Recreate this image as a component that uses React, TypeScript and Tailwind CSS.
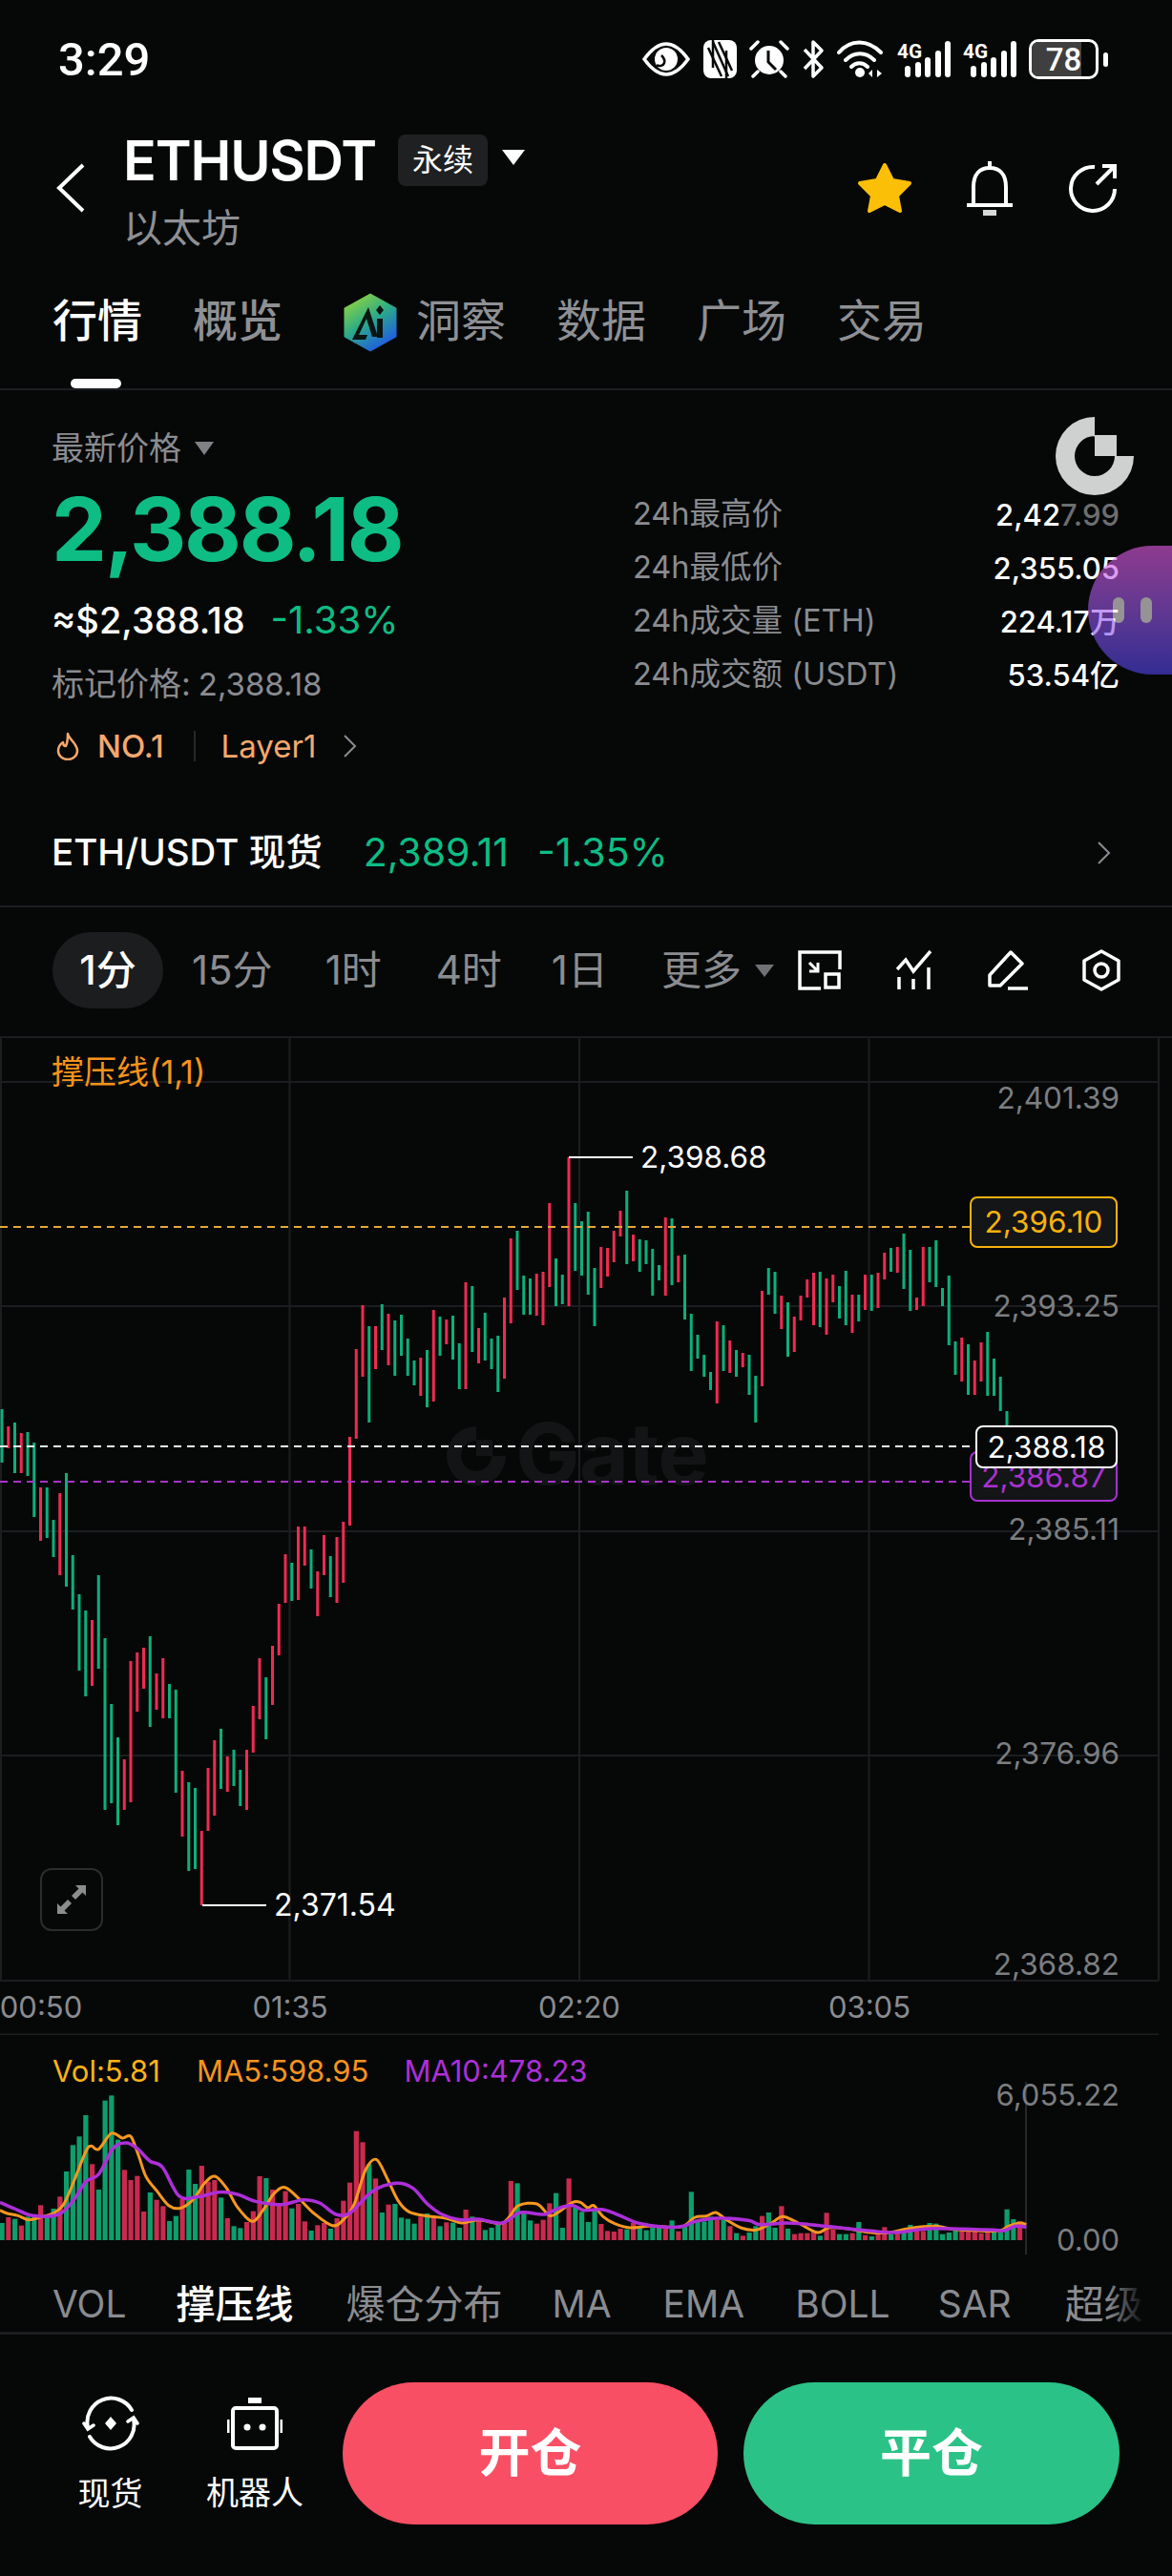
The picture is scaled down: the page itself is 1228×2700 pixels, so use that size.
const candleData =
  "g1477-1533 r1495-1518 g1491-1544 r1502-1544 g1501-1547 g1512-1590 r1559-1615 g1559-1612 g1593-1632 r1565-1651 g1544-1663 g1630-1687 g1671-1751 g1688-1778 r1698-1767 g1651-1749 g1717-1897 g1786-1890 g1821-1913 r1844-1897 r1741-1889 r1732-1794 r1727-1770 g1715-1810 r1754-1792 r1738-1801 g1765-1801 g1771-1879 r1856-1925 g1868-1961 g1874-1959 r1919-1997 r1853-1919 r1824-1903 g1812-1875 r1841-1878 g1834-1872 g1855-1893 r1834-1897 r1788-1837 r1738-1802 g1758-1823 r1725-1787 r1681-1735 r1629-1680 g1638-1678 r1600-1677 r1600-1641 g1624-1665 r1647-1694 r1609-1651 g1631-1674 r1611-1680 r1595-1659 r1506-1599 r1414-1508 r1368-1443 g1390-1491 r1390-1435 g1367-1415 r1377-1431 g1384-1442 g1378-1421 g1403-1442 g1426-1452 r1423-1463 g1415-1475 r1373-1469 g1380-1421 r1383-1409 g1379-1425 g1408-1456 r1344-1456 g1348-1417 r1392-1429 g1376-1426 g1403-1435 g1400-1459 r1360-1445 r1298-1387 g1290-1352 g1337-1378 g1340-1378 r1335-1379 r1333-1389 r1261-1349 g1319-1369 g1336-1367 r1213-1369 g1261-1332 g1280-1337 g1270-1357 g1329-1390 r1307-1350 r1308-1338 r1290-1323 r1269-1296 g1248-1325 r1294-1322 g1299-1333 g1300-1325 g1309-1358 g1326-1342 r1276-1358 g1277-1347 r1316-1344 g1315-1383 g1377-1437 g1399-1424 g1420-1443 g1438-1457 r1385-1471 g1389-1437 r1405-1439 g1415-1443 r1418-1433 g1420-1462 g1442-1491 r1353-1453 g1329-1357 g1333-1377 r1358-1393 g1365-1422 r1380-1417 r1358-1384 r1341-1360 r1334-1389 g1333-1391 r1340-1399 r1336-1365 g1348-1382 g1332-1389 r1357-1397 g1357-1385 r1336-1373 g1336-1374 r1334-1371 r1313-1341 g1308-1333 r1307-1334 g1293-1351 g1310-1374 r1360-1373 r1307-1369 g1307-1344 g1300-1349 g1350-1369 g1337-1410 g1406-1441 r1402-1448 g1409-1462 r1426-1462 r1407-1448 g1396-1463 g1424-1463 g1443-1479 g1479-1500"
    .split(" ");

const volData =
  "g630 r612 g617 r638 g610 g612 r574 g610 g585 r547 g468 g385 g358 g291 r445 g525 g245 g229 g368 r463 r495 r482 r594 g534 r557 r577 g624 g608 r555 g462 g507 r450 r500 r495 g550 r615 g640 g646 r627 r593 r483 g489 r525 r575 r530 g584 r570 r625 g654 r637 r630 g648 r615 r560 r503 r341 r376 g445 r490 g597 r572 g570 g613 g617 g632 r610 g600 r610 g640 r628 g629 g645 r588 g610 r620 g652 g645 g635 r625 r498 g505 g595 g622 r632 r620 r568 g536 g645 r490 g580 g595 g627 g590 r633 r655 r657 r648 g650 r630 g640 g653 g645 g640 r645 g622 r656 g640 g532 g620 g625 g610 r620 g620 r640 g662 r670 g660 g640 r608 g597 g645 r577 g648 r665 r662 r662 r655 g670 r598 r650 g665 g665 r662 g627 r668 g672 r655 r643 g665 r660 g655 g636 r655 r655 g630 g632 g665 g660 g650 r655 r655 r650 r662 r655 g660 g660 g587 g618 r625"
    .split(" ");

const toLeft = (p: number[][]) => p.map(([x, y]) => [x / 2.613, 2120 + y / 3]);
const toRight = (p: number[][]) => p.map(([x, y]) => [600 + x / 2.497, 2120 + y / 3]);

const ma5 = [
  ...toLeft([[0,590],[20,600],[50,607],[78,620],[110,612],[150,597],[175,570],[200,505],[235,405],[250,388],[270,398],[305,348],[335,363],[358,358],[380,420],[400,485],[430,530],[462,575],[495,583],[530,555],[560,505],[588,483],[620,520],[650,580],[690,625],[720,590],[750,538],[780,518],[820,555],[860,600],[910,638],[940,620],[970,570],[1000,465],[1030,430],[1060,490],[1090,560],[1120,595],[1170,608],[1220,615],[1265,630],[1310,620],[1370,632],[1395,610],[1420,575],[1470,570],[1505,607],[1530,595]]),
  ...toRight([[0,565],[20,565],[40,582],[55,575],[80,610],[110,632],[150,645],[200,640],[250,643],[290,640],[320,612],[350,608],[375,597],[400,618],[440,645],[480,652],[520,630],[550,610],[590,630],[640,660],[670,645],[720,648],[780,660],[830,660],[880,647],[950,640],[1000,650],[1110,655],[1140,640],[1170,630],[1187,635]]),
];

const ma10 = [
  ...toLeft([[0,565],[40,585],[90,607],[160,603],[200,560],[235,500],[270,477],[310,395],[345,378],[375,395],[410,435],[445,455],[490,545],[540,548],[600,533],[650,540],[700,562],[770,572],[830,557],[875,567],[920,603],[960,597],[1020,530],[1085,505],[1130,520],[1170,570],[1210,603],[1260,620],[1310,618],[1375,630],[1425,597],[1490,603],[1530,583]]),
  ...toRight([[0,575],[30,590],[80,588],[130,610],[170,630],[240,643],[290,640],[320,625],[380,615],[460,622],[490,635],[560,630],[620,635],[700,645],[780,655],[840,660],[900,652],[950,647],[1100,652],[1125,655],[1160,640],[1187,643]]),
];

// catmull-rom through the traced points
function smooth(p: number[][]) {
  let d = `M${p[0][0]} ${p[0][1]}`;
  for (let i = 0; i < p.length - 1; i++) {
    const a = p[i - 1] || p[i];
    const b = p[i];
    const c = p[i + 1];
    const e = p[i + 2] || c;
    d += ` C${b[0] + (c[0] - a[0]) / 6} ${b[1] + (c[1] - a[1]) / 6} ${c[0] - (e[0] - b[0]) / 6} ${c[1] - (e[1] - b[1]) / 6} ${c[0]} ${c[1]}`;
  }
  return d;
}

const gatePath = "M41 0A41 41 0 1 0 82 41H62A21 21 0 1 1 41 20ZM41 19H64V41H41Z";

function Chevron({ className }: { className?: string }) {
  return (
    <svg width="15" height="24" viewBox="0 0 15 24" className={className}>
      <path d="M2 1L13 12L2 23" fill="none" stroke="#8a8c90" strokeWidth="2" />
    </svg>
  );
}

function Signal() {
  return (
    <svg width="56" height="42" viewBox="0 0 56 42" fill="#fff">
      <text x="0" y="20" fontSize="21" fontWeight="700" fontFamily="Roboto, sans-serif" textLength="26" lengthAdjust="spacingAndGlyphs">4G</text>
      <rect x="8" y="28" width="6" height="12" rx="3" />
      <rect x="19" y="24" width="6" height="16" rx="3" />
      <rect x="29" y="19" width="6" height="21" rx="3" />
      <rect x="40" y="12" width="6" height="28" rx="3" />
      <rect x="50" y="2" width="6" height="38" rx="3" />
    </svg>
  );
}

function StatusBar() {
  return (
    <div className="flex h-[124px] items-center justify-between pl-[61px] pr-[67px]">
      <span className="font-['Roboto'] text-[49px] font-medium leading-none text-white">3:29</span>
      <div className="flex items-center">
        {/* eye */}
        <svg width="50" height="36" viewBox="0 0 50 36" className="mr-[14px]">
          <path d="M2 18C10 7 17 2 25 2s15 5 23 16c-8 11-15 16-23 16S10 29 2 18Z" fill="none" stroke="#fff" strokeWidth="3.5" />
          <circle cx="25" cy="18" r="12" fill="#fff" />
          <path d="M15 24c3 2 7 1 8-2s-1-6-3-8" fill="none" stroke="#060808" strokeWidth="2.5" />
        </svg>
        {/* nfc */}
        <svg width="35" height="40" viewBox="0 0 35 40" className="mr-[13px]">
          <rect width="35" height="40" rx="8" fill="#fff" />
          <path d="M10 0V29M24 11V40" fill="none" stroke="#060808" strokeWidth="2.5" />
          <path d="M10 2L26 38M16 2L30 32M5 8L19 38" fill="none" stroke="#060808" strokeWidth="2.5" />
        </svg>
        {/* alarm */}
        <svg width="42" height="40" viewBox="0 0 42 40" className="mr-[13px]">
          <circle cx="21" cy="21" r="15" fill="#fff" />
          <path d="M20 11V23L28 31" fill="none" stroke="#060808" strokeWidth="3" />
          <path d="M2 9L9 2M40 9L33 2M9 33L4 38M33 33L38 38" stroke="#fff" strokeWidth="3.5" strokeLinecap="round" />
        </svg>
        {/* bluetooth */}
        <svg width="24" height="42" viewBox="0 0 24 42" className="mr-[13px]">
          <path d="M3 11L21 30L12 39V3L21 12L3 31" fill="none" stroke="#fff" strokeWidth="3.5" strokeLinejoin="round" />
        </svg>
        {/* wifi */}
        <svg width="49" height="42" viewBox="0 0 49 42" className="mr-[14px]">
          <path d="M2 14C14 0 32 0 46 14M9 22C18 13 30 13 39 22M15 29C20 24 27 24 32 29" fill="none" stroke="#fff" strokeWidth="4" strokeLinecap="round" />
          <circle cx="24" cy="35" r="5" fill="#fff" />
          <path d="M37 32V40L33 36ZM42 32V40L47 36Z" fill="#fff" />
        </svg>
        <Signal />
        <div className="w-[13px]" />
        <Signal />
        {/* battery */}
        <div className="relative ml-[13px] flex h-[42px] w-[73px] items-center justify-center overflow-hidden rounded-[10px] border-[3px] border-white">
          <div className="absolute inset-y-0 left-0 w-[78%] bg-[#3f3f3f]" />
          <span className="relative font-['Roboto'] text-[33px] font-medium leading-none text-white">78</span>
        </div>
        <div className="ml-[5px] h-[15px] w-[5px] rounded-full bg-white" />
      </div>
    </div>
  );
}

function Header() {
  return (
    <div className="flex h-[146px] items-center justify-between pl-[59px] pr-[57px]">
      <div className="flex items-center">
        <svg width="30" height="52" viewBox="0 0 30 52" className="mr-[40px]">
          <path d="M28 2L3 26L28 50" fill="none" stroke="#fff" strokeWidth="4" />
        </svg>
        <div className="mt-[5px] flex flex-col">
          <div className="flex items-center">
            <span className="text-[57.5px] font-semibold leading-[54px] tracking-[-0.02em] text-white">ETHUSDT</span>
            <span className="ml-[23px] flex h-[54px] w-[94px] items-center justify-center rounded-[8px] bg-[#1e2022] text-[32px] leading-none text-white">永续</span>
            <svg width="24" height="16" viewBox="0 0 24 16" className="ml-[15px] mt-[-6px]">
              <path d="M0 0H24L12 16Z" fill="#fff" />
            </svg>
          </div>
          <span className="mt-[24px] text-[41px] leading-[40px] text-[#8e9094]">以太坊</span>
        </div>
      </div>
      <div className="flex items-center">
        <svg width="58" height="54" viewBox="0 0 58 54">
          <path d="M29 3L37 19L55 22L42 35L45 51L29 43L13 51L16 35L3 22L21 19Z" fill="#fcbf07" stroke="#fcbf07" strokeWidth="4" strokeLinejoin="round" />
        </svg>
        <svg width="48" height="58" viewBox="0 0 48 58" className="ml-[57px]">
          <path d="M24 1V8M7 46V28C7 14 14 8 24 8S41 14 41 28V46M0 47H48" fill="none" stroke="#fff" strokeWidth="4" />
          <rect x="17" y="52" width="14" height="6" fill="#d8d8d8" />
        </svg>
        <svg width="52" height="52" viewBox="0 0 52 52" className="ml-[58px]">
          <path d="M28 4A23 23 0 1 0 49 27" fill="none" stroke="#fff" strokeWidth="4" />
          <path d="M30 22L48 4M36 3H49V16" fill="none" stroke="#fff" strokeWidth="4" />
        </svg>
      </div>
    </div>
  );
}

function Tabs() {
  const rest = ["数据", "广场", "交易"];
  return (
    <div className="relative flex h-[139px] items-start gap-[53px] border-b-2 border-[#1c1e22] pl-[55px] pt-[42px] text-[47px] leading-[48px] text-[#8e9094]">
      <span className="font-medium text-white">行情</span>
      <span className="font-medium">概览</span>
      <div className="ml-[11px] flex items-start gap-[20px]">
        <svg width="56" height="62" viewBox="0 0 56 62" className="mt-[-5px]">
          <defs>
            <linearGradient id="ai" x1="0" y1="0" x2="0.6" y2="1">
              <stop offset="0.1" stopColor="#8ed53e" />
              <stop offset="0.55" stopColor="#2cab88" />
              <stop offset="1" stopColor="#1f5fe0" />
            </linearGradient>
          </defs>
          <path d="M28 1L55 16V46L28 61L1 46V16Z" fill="url(#ai)" stroke="url(#ai)" strokeWidth="1" strokeLinejoin="round" />
          <path d="M26 15L36 46H30L24 27L16 44H25L23 49H9Z" fill="#0b1512" />
          <rect x="35" y="27" width="6" height="20" fill="#0b1512" />
          <path d="M38 13L42 18L38 23L34 18Z" fill="#0b1512" />
        </svg>
        <span>洞察</span>
      </div>
      {rest.map((t) => (
        <span key={t}>{t}</span>
      ))}
      <div className="absolute bottom-0 left-[74px] h-[10px] w-[53px] rounded-full bg-white" />
    </div>
  );
}

function StatRow({ label, value }: { label: string; value: React.ReactNode }) {
  return (
    <div className="flex h-[56px] items-center justify-between text-[32.5px] leading-none">
      <span className="text-[#8a8c90]">{label}</span>
      <span className="text-[31px] font-medium text-white">{value}</span>
    </div>
  );
}

function Stats() {
  return (
    <div className="relative flex h-[429px] justify-between pl-[54px] pr-[55px]">
      <div className="flex flex-col">
        <div className="mt-[46px] flex h-[30px] items-center text-[34px] leading-none text-[#8a8c90]">
          最新价格
          <svg width="20" height="14" viewBox="0 0 20 14" className="ml-[14px]">
            <path d="M0 0H20L10 14Z" fill="#7f8185" />
          </svg>
        </div>
        <div className="mt-[30px] h-[80px] text-[92px] font-bold leading-[80px] tracking-[-0.025em] text-[#0dbd84]">2,388.18</div>
        <div className="mt-[35px] flex h-[40px] items-center leading-none">
          <span className="text-[38px] font-medium text-white">≈$2,388.18</span>
          <span className="ml-[27px] text-[40px] text-[#0dbd84]">-1.33%</span>
        </div>
        <div className="mt-[27px] flex h-[40px] items-center text-[34px] leading-none text-[#8a8c90]">
          标记价格:<span className="ml-[8px] text-[33px]">2,388.18</span>
        </div>
        <div className="mt-[25px] flex h-[40px] items-center text-[33px] leading-none text-[#f5a86e]">
          <svg width="24" height="30" viewBox="0 0 24 30" className="ml-[5px]">
            <path d="M12 2C13 8 22 12 22 20A10 9 0 0 1 2 20C2 16 4 13 7 11C7 14 8 15 10 15C12 11 12 6 12 2Z" fill="none" stroke="#f5a86e" strokeWidth="2.5" strokeLinejoin="round" />
          </svg>
          <span className="ml-[19px] font-medium">NO.1</span>
          <div className="ml-[31px] h-[32px] w-[2px] bg-[#26282a]" />
          <span className="ml-[27px]">Layer1</span>
          <Chevron className="ml-[28px]" />
        </div>
      </div>
      <div className="mt-[102px] w-[510px]">
        <StatRow label="24h最高价" value={<>2,42<span className="text-[#6d6e6e]">7.99</span></>} />
        <StatRow label="24h最低价" value="2,355.05" />
        <StatRow label="24h成交量 (ETH)" value="224.17万" />
        <StatRow label="24h成交额 (USDT)" value="53.54亿" />
      </div>

      {/* floating gate badge + assistant bubble */}
      <svg width="82" height="82" viewBox="0 0 82 82" className="absolute left-[1106px] top-[28px]">
        <path d={gatePath} fill="#cfd1d0" />
      </svg>
      <div className="absolute left-[1140px] top-[163px] flex h-[135px] w-[88px] items-center rounded-l-full bg-gradient-to-b from-[#e85ce8] to-[#5244f0] pl-[26px] opacity-[0.6]">
        <div className="h-[27px] w-[12px] rounded-full bg-[#f4f0f0]" />
        <div className="ml-[17px] h-[27px] w-[12px] rounded-full bg-[#f4f0f0]" />
      </div>
    </div>
  );
}

function SpotRow() {
  return (
    <div className="flex h-[113px] items-center border-b-2 border-[#1c1e22] pl-[54px] pr-[64px] leading-none">
      <span className="text-[38.5px] font-medium text-white">ETH/USDT 现货</span>
      <span className="ml-[43px] text-[41px] text-[#0dbd84]">2,389.11</span>
      <span className="ml-[30px] text-[41px] text-[#0dbd84]">-1.35%</span>
      <Chevron className="ml-auto" />
    </div>
  );
}

function Timeframes() {
  return (
    <div className="flex h-[135px] items-center pb-[3px] pl-[55px] text-[42px] leading-none text-[#8a8c90]">
      <span className="flex h-[80px] w-[116px] items-center justify-center rounded-full bg-[#1b1d1f] font-medium text-white">1分</span>
      <span className="ml-[30px]">15分</span>
      <span className="ml-[55px]">1时</span>
      <span className="ml-[57px]">4时</span>
      <span className="ml-[52px]">1日</span>
      <span className="ml-[56px]">更多</span>
      <svg width="20" height="13" viewBox="0 0 20 13" className="ml-[14px]">
        <path d="M0 0H20L10 13Z" fill="#6f7175" />
      </svg>
      <svg width="46" height="42" viewBox="0 0 46 42" className="ml-[25px]" fill="none" stroke="#fff" strokeWidth="3.5">
        <path d="M44 20V2H2V40H24" />
        <rect x="29" y="25" width="14" height="14" />
        <path d="M12 13L21 22M21 13V22H12" strokeWidth="3" />
      </svg>
      <svg width="38" height="42" viewBox="0 0 38 42" className="ml-[57px]" fill="none" stroke="#fff" strokeWidth="3.5">
        <path d="M1 20L10 10L18 22L36 1" />
        <path d="M3 28V41M18 30V41M34 18V41" />
      </svg>
      <svg width="44" height="42" viewBox="0 0 44 42" className="ml-[57px]" fill="none" stroke="#fff" strokeWidth="3.5" strokeLinejoin="round">
        <path d="M25 2L37 14L14 37H3V26Z" />
        <path d="M22 40H43" />
      </svg>
      <svg width="40" height="44" viewBox="0 0 40 44" className="ml-[56px]" fill="none" stroke="#fff" strokeWidth="3.5" strokeLinejoin="round">
        <path d="M20 2L38 12V32L20 42L2 32V12Z" />
        <circle cx="20" cy="22" r="7" />
      </svg>
    </div>
  );
}

function PriceTag({ top, left, color, bg, text, height }: { top: number; left: number; color: string; bg: string; text: string; height: number }) {
  return (
    <div
      className="absolute flex items-center justify-center rounded-[8px] border-2 text-[31.5px] leading-none"
      style={{ top, left, height, width: 1171 - left, borderColor: color, background: bg, color }}
    >
      {text}
    </div>
  );
}

function Chart() {
  const axis = [
    [49, "2,401.39"],
    [267, "2,393.25"],
    [501, "2,385.11"],
    [736, "2,376.96"],
    [957, "2,368.82"],
  ] as const;
  const times = [
    [43, "00:50"],
    [304, "01:35"],
    [607, "02:20"],
    [911, "03:05"],
  ] as const;
  return (
    <div className="relative h-[1047px]">
      <div className="absolute left-[468px] top-[393px] flex items-center gap-[10px] text-[90px] font-bold leading-none tracking-[-0.01em] text-[#121416]">
        <svg width="62" height="62" viewBox="0 0 82 82" className="mt-[4px]">
          <path d={gatePath} fill="#121416" />
        </svg>
        Gate
      </div>
      <svg width="1228" height="1047" viewBox="0 1086 1228 1047" className="absolute left-0 top-0">
        <g stroke="#1b1d20" strokeWidth="2">
          <path d="M0 1087H1228" />
          {[1134, 1369, 1605, 1840, 2076].map((y) => (
            <path key={y} d={`M0 ${y}H1214`} />
          ))}
          {[1, 303.5, 607, 910.5, 1214].map((x) => (
            <path key={x} d={`M${x} 1086V2076`} />
          ))}
          <path d="M0 2132.5H1214" />
        </g>
        {candleData.map((c, i) => {
          const [t, b] = c.slice(1).split("-").map(Number);
          return <rect key={i} x={0.5 + 6.75 * i} y={t} width="3" height={b - t} fill={c[0] === "g" ? "#0bb07c" : "#ee2b52"} />;
        })}
        <path d="M0 1286H1016" stroke="#e5a93b" strokeWidth="2" strokeDasharray="8 6" />
        <path d="M0 1516H1022" stroke="#f2f2f2" strokeWidth="2" strokeDasharray="8 6" />
        <path d="M0 1553H1016" stroke="#a732c8" strokeWidth="2" strokeDasharray="8 6" />
        <path d="M596 1213H663M212 1997H279" stroke="#fff" strokeWidth="2" />
      </svg>

      <span className="absolute left-[54px] top-[22px] text-[34px] leading-[32px] text-[#f7931a]">撑压线(1,1)</span>
      <span className="absolute left-[671px] top-[111px] text-[31.5px] leading-[32px] text-white">2,398.68</span>
      <span className="absolute left-[287px] top-[895px] text-[32px] leading-[32px] text-white">2,371.54</span>

      {axis.map(([top, t]) => (
        <span key={t} className="absolute right-[55px] text-[31.5px] leading-[32px] text-[#7c7e80]" style={{ top }}>
          {t}
        </span>
      ))}
      {times.map(([x, t]) => (
        <span key={t} className="absolute top-[1002px] -translate-x-1/2 text-[31px] leading-[32px] text-[#8a8c90]" style={{ left: x }}>
          {t}
        </span>
      ))}

      <PriceTag top={168} left={1016} color="#f7b20f" bg="#141517" text="2,396.10" height={54} />
      <PriceTag top={435} left={1016} color="#a732d0" bg="#141517" text="2,386.87" height={53} />
      <PriceTag top={408} left={1022} color="#ffffff" bg="#060808" text="2,388.18" height={45} />

      <div className="absolute left-[42px] top-[872px] flex h-[66px] w-[66px] items-center justify-center rounded-[12px] border-2 border-[#2a2c2e]">
        <svg width="32" height="32" viewBox="0 0 32 32" fill="#8c8c8c">
          <path d="M20 1H31V12L27.5 8.5L20 16L16 12L23.5 4.5Z" />
          <path d="M12 31H1V20L4.5 23.5L12 16L16 20L8.5 27.5Z" />
        </svg>
      </div>
    </div>
  );
}

function Volume() {
  return (
    <div className="relative h-[255px]">
      <svg width="1228" height="255" viewBox="0 2133 1228 255" className="absolute left-0 top-0">
        {volData.map((v, i) => {
          const y = 2120 + Number(v.slice(1)) / 3;
          return <rect key={i} x={-0.5 + 6.75 * i} y={y} width="5.2" height={2348 - y} fill={v[0] === "g" ? "#0d9e6c" : "#c92a4e"} />;
        })}
        <path d="M1075 2182V2363" stroke="#26282a" strokeWidth="2" />
        <path d={smooth(ma5)} fill="none" stroke="#f7981f" strokeWidth="3" strokeLinejoin="round" />
        <path d={smooth(ma10)} fill="none" stroke="#ad2fd8" strokeWidth="3.5" strokeLinejoin="round" />
      </svg>
      <div className="relative flex items-center pl-[55px] pt-[22px] text-[31px] leading-[32px]">
        <span className="text-[#fbb316]">Vol:5.81</span>
        <span className="ml-[38px] text-[#f7931e]">MA5:598.95</span>
        <span className="ml-[37px] text-[#ad2fd8]">MA10:478.23</span>
      </div>
      <span className="absolute right-[55px] top-[47px] text-[31px] leading-[32px] text-[#7c7e80]">6,055.22</span>
      <span className="absolute right-[55px] top-[199px] text-[31px] leading-[32px] text-[#7c7e80]">0.00</span>
    </div>
  );
}

function Indicators() {
  return (
    <div className="relative flex h-[59px] items-start overflow-hidden whitespace-nowrap border-b-[3px] border-[#1c1e20] pl-[55px] text-[39px] leading-[54px] text-[#8a8c90]">
      <span>VOL</span>
      <span className="ml-[52px] text-[41px] font-medium text-white">撑压线</span>
      <span className="ml-[55px] text-[41px]">爆仓分布</span>
      <span className="ml-[52px]">MA</span>
      <span className="ml-[54px]">EMA</span>
      <span className="ml-[53px]">BOLL</span>
      <span className="ml-[50px]">SAR</span>
      <span className="ml-[56px] text-[41px]">超级</span>
      <div className="absolute right-[28px] top-0 h-full w-[40px] bg-gradient-to-r from-transparent to-[#060808]" />
      <div className="absolute right-0 top-0 h-full w-[28px] bg-[#060808]" />
    </div>
  );
}

function BottomBar() {
  return (
    <div className="flex items-start pl-[82px] pr-[55px] pt-[50px]">
      <div className="flex w-[67px] flex-col items-center">
        <svg width="60" height="60" viewBox="0 0 60 60" className="mt-[13px]" fill="none" stroke="#fff" strokeWidth="4" strokeLinecap="round">
          <path d="M6 34A25 25 0 0 1 52 16M54 26A25 25 0 0 1 8 44" />
          <path d="M2 30L6 36L12 32M58 30L54 24L48 28" strokeWidth="3.5" />
          <path d="M30 23L36 30L30 37L24 30Z" fill="#fff" stroke="none" />
        </svg>
        <span className="mt-[27px] whitespace-nowrap text-[34px] leading-[34px] text-white">现货</span>
      </div>
      <div className="ml-[68px] flex w-[100px] flex-col items-center">
        <svg width="58" height="56" viewBox="0 0 58 56" className="mt-[15px]" fill="none" stroke="#fff" strokeWidth="4">
          <rect x="6" y="12" width="46" height="42" rx="3" />
          <rect x="22" y="1" width="14" height="6" fill="#fff" strokeWidth="0" />
          <path d="M1 24V38M57 24V38" strokeWidth="3" />
          <circle cx="21" cy="32" r="3.5" fill="#fff" stroke="none" />
          <circle cx="37" cy="32" r="3.5" fill="#fff" stroke="none" />
        </svg>
        <span className="mt-[28px] whitespace-nowrap text-[34px] leading-[34px] text-white">机器人</span>
      </div>
      <div className="ml-[42px] flex h-[149px] w-[393px] items-center justify-center rounded-full bg-[#f94f64] text-[54px] font-bold leading-none text-white">开仓</div>
      <div className="ml-[27px] flex h-[149px] w-[394px] items-center justify-center rounded-full bg-[#2bc287] text-[54px] font-bold leading-none text-white">平仓</div>
    </div>
  );
}

export default function App() {
  return (
    <div className="h-[2700px] w-[1228px] overflow-hidden bg-[#060808] font-[Inter,'Noto_Sans_CJK_SC',sans-serif]">
      <StatusBar />
      <Header />
      <Tabs />
      <Stats />
      <SpotRow />
      <Timeframes />
      <Chart />
      <Volume />
      <Indicators />
      <BottomBar />
    </div>
  );
}
